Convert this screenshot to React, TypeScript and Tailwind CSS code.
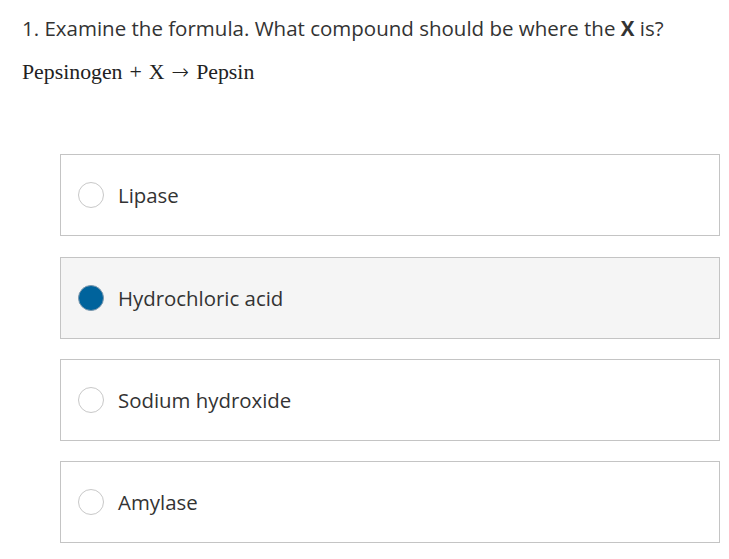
const options = [
  { id: "a", label: "Lipase" },
  { id: "b", label: "Hydrochloric acid" },
  { id: "c", label: "Sodium hydroxide" },
  { id: "d", label: "Amylase" },
];

export default function App() {
  const selected = "b";
  return (
    <div className="min-h-screen bg-white pl-[22px] pr-[9px] pt-[14px] text-[#333333]" style={{ fontFamily: '"Open Sans", sans-serif' }}>
      <p className="h-[28px] text-[20.5px] leading-[28px]">
        1. Examine the formula. What compound should be where the <b>X</b> is?
      </p>
      <div className="mt-[16px] flex h-[28px] items-center text-[21.8px] leading-[28px] text-[#222]" style={{ fontFamily: '"Liberation Serif", serif' }}>
        <span>Pepsinogen</span>
        <span className="mx-[7px]">+</span>
        <span>X</span>
        <span className="mx-[7px] font-['DejaVu_Sans'] text-[21px] font-light">→</span>
        <span>Pepsin</span>
      </div>
      <div className="ml-[38px] mt-[68px] flex flex-col gap-[20px]">
        {options.map((o, i) => {
          const on = o.id === selected;
          return (
            <label
              key={o.id}
              className={`flex h-[82px] items-center border border-[#c4c4c4] pl-[17px] ${i === 1 ? "mt-[1px]" : ""} ${on ? "bg-[#f5f5f5]" : "bg-white"}`}
            >
              <span
                className={`h-[26px] w-[26px] shrink-0 rounded-full border ${on ? "border-[#7d98ad] bg-[#00639c]" : "border-[#c8c8c8] bg-white"}`}
              />
              <span className="ml-[14px] text-[20.4px] leading-[28px]">{o.label}</span>
            </label>
          );
        })}
      </div>
    </div>
  );
}
